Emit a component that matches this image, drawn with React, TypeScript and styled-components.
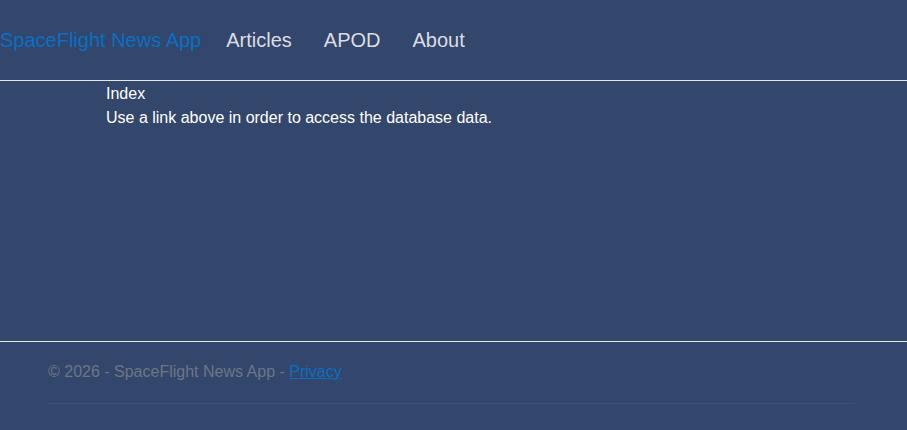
import React from "react";
import styled, { createGlobalStyle } from "styled-components";

const GlobalStyle = createGlobalStyle`
  html, body {
    margin: 0;
    padding: 0;
    background: #33466c;
    font-family: "Liberation Sans", Arial, sans-serif;
  }
`;

const Page = styled.div`
  display: flex;
  flex-direction: column;
  min-height: 430px;
  background: #33466c;
  color: #ffffff;
`;

const Header = styled.header`
  display: flex;
  align-items: center;
  height: 80px;
  border-bottom: 1px solid #e6e6ee;
`;

const Brand = styled.a`
  font-size: 20px;
  color: #0a6fc2;
  text-decoration: none;
  margin-right: 9px;
  line-height: 30px;
`;

const NavLink = styled.a`
  font-size: 20px;
  color: #dcdde2;
  text-decoration: none;
  padding: 0 16px;
  line-height: 30px;
`;

const Main = styled.main`
  height: 259px;
  padding: 1px 0 0 106px;
  font-size: 16px;
  line-height: 24px;
  border-bottom: 1px solid #e6e6ee;
`;

const Line = styled.div`
  color: #ffffff;
`;

const Footer = styled.footer`
  margin: 0 52px 0 48px;
  padding-top: 18px;
  height: 43px;
  border-bottom: 1px solid #3e5078;
  font-size: 16px;
  line-height: 24px;
  color: #6c7686;
`;

const FooterLink = styled.a`
  color: #0a6fc2;
  text-decoration: underline;
`;

export default function App() {
  return (
    <>
      <GlobalStyle />
      <Page>
        <Header>
          <Brand href="#">SpaceFlight News App</Brand>
          <NavLink href="#">Articles</NavLink>
          <NavLink href="#">APOD</NavLink>
          <NavLink href="#">About</NavLink>
        </Header>
        <Main>
          <Line>Index</Line>
          <Line>Use a link above in order to access the database data.</Line>
        </Main>
        <Footer>
          © 2026 - SpaceFlight News App - <FooterLink href="#">Privacy</FooterLink>
        </Footer>
      </Page>
    </>
  );
}
